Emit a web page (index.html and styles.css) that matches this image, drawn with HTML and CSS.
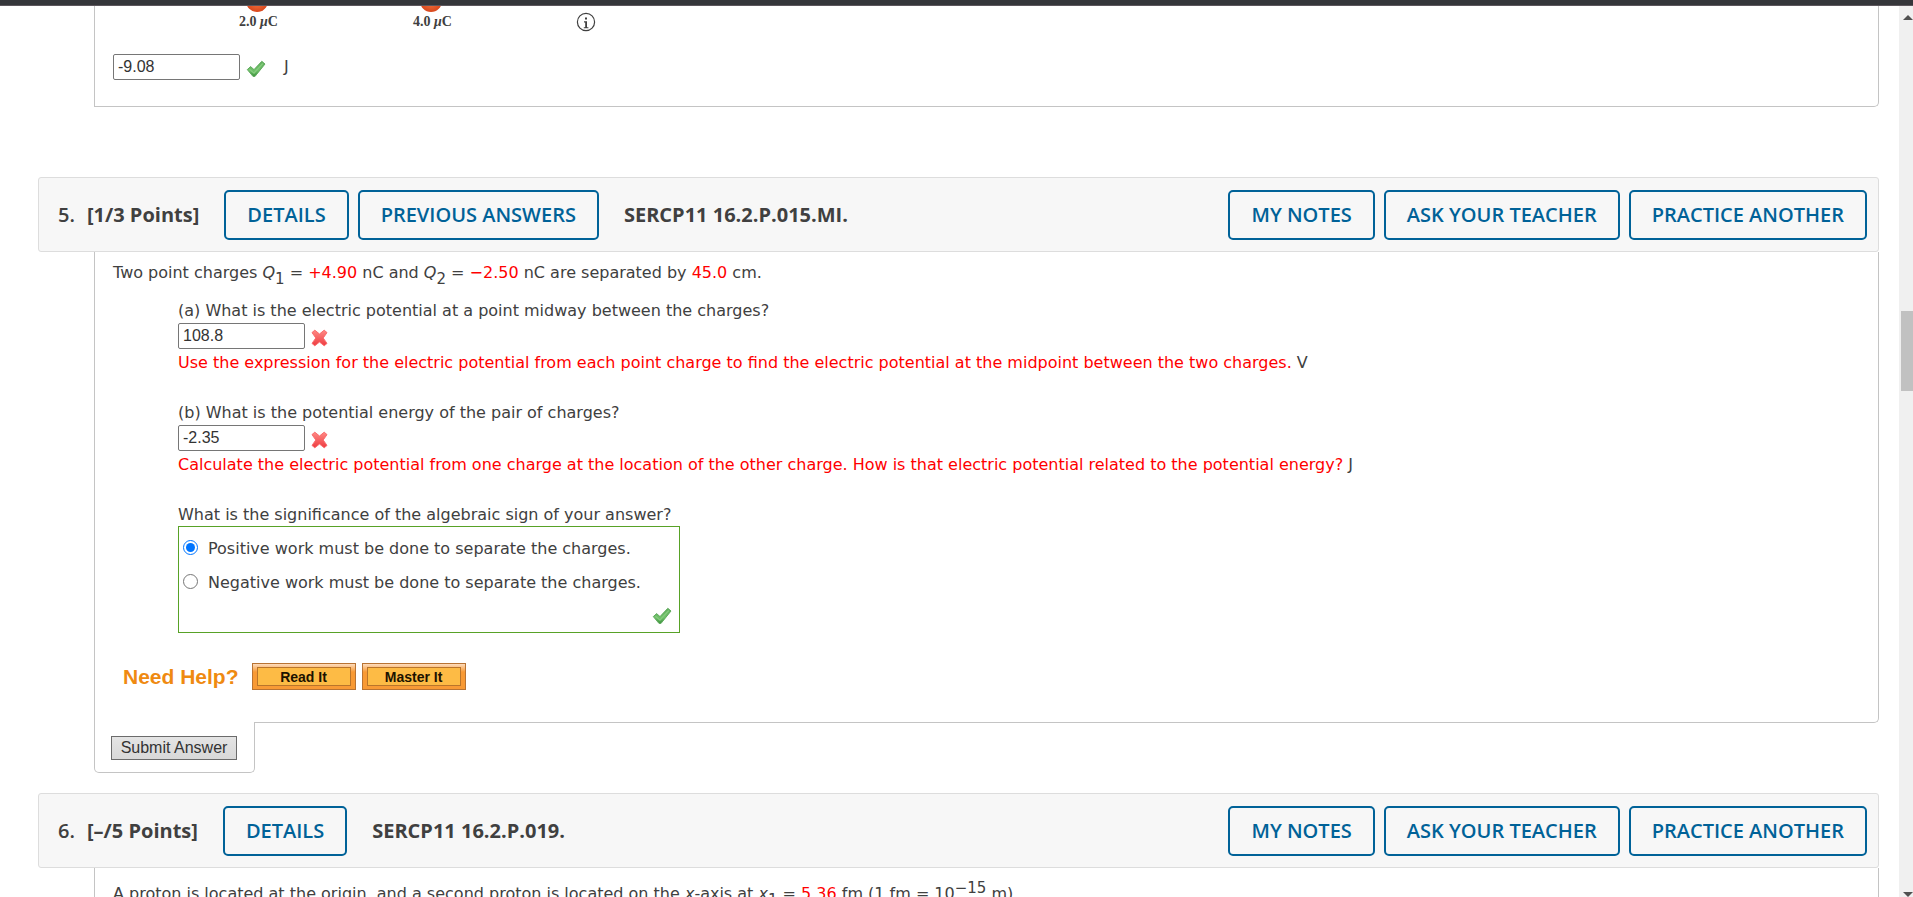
FILE: index.html
```html
<!DOCTYPE html>
<html lang="en">
<head>
    <meta charset="UTF-8">
    <meta name="viewport" content="width=device-width, initial-scale=1.0">
    <title>Homework - Chapter 16</title>
    <link rel="stylesheet" href="styles.css">
</head>
<body>
    <!-- shared marks -->
    <svg class="defs" aria-hidden="true">
        <defs>
            <linearGradient id="green" x1="0" y1="0" x2="0" y2="1">
                <stop offset="0" stop-color="#5fae5c"/>
                <stop offset="0.6" stop-color="#6fc069"/>
                <stop offset="1" stop-color="#3f9440"/>
            </linearGradient>
            <linearGradient id="red" x1="0" y1="0" x2="0" y2="1">
                <stop offset="0" stop-color="#ff8a85"/>
                <stop offset="1" stop-color="#ee3b40"/>
            </linearGradient>
            <symbol id="check" viewBox="0 0 20 18">
                <path d="M1.3 9.6 4.6 6.6 8 9.6 15.8 1.3 19 4 9 16.4 7 16.4Z" fill="url(#green)" stroke="#62ab5f" stroke-linejoin="round"/>
                <path d="M3.4 9.2 8 13 16.8 3.6" fill="none" stroke="#84cb7c" stroke-width="1.4"/>
            </symbol>
            <symbol id="cross" viewBox="0 0 20 18">
                <path d="M1 3.6 3.8 1.2 8.5 5 13.2 1.2 16 3.6 12.2 9 16 14.4 13.2 16.8 8.5 13 3.8 16.8 1 14.4 4.8 9Z" fill="url(#red)" stroke="#fa6a6c" stroke-linejoin="round"/>
            </symbol>
        </defs>
    </svg>

    <div class="topbar"></div>
    <div class="page">
        <main>
            <section class="problem">
                <div class="panel panel-first">
                    <div class="figure">
                        <svg width="360" height="24" role="img" aria-label="Two point charges">
                            <defs>
                                <radialGradient id="ball">
                                    <stop offset="0" stop-color="#f47a45"/>
                                    <stop offset="1" stop-color="#d9471c"/>
                                </radialGradient>
                            </defs>
                            <circle cx="144" cy="-5" r="11" fill="url(#ball)"/>
                            <circle cx="318" cy="-5" r="11" fill="url(#ball)"/>
                            <text x="126" y="20">2.0 <tspan font-style="italic">μ</tspan>C</text>
                            <text x="300" y="20">4.0 <tspan font-style="italic">μ</tspan>C</text>
                        </svg>
                        <svg width="20" height="20" viewBox="0 0 20 20" role="img" aria-label="Image description">
                            <circle cx="10" cy="10" r="8.6" fill="none" stroke="#404040" stroke-width="1.2"/>
                            <path d="M9 5.6h2v2h-2zM8 9.2h3v6h1.4v1H7.8v-1h1.4v-4.8H8z" fill="#404040"/>
                        </svg>
                    </div>
                    <div class="answer">
                        <input type="text" value="-9.08" aria-label="Potential energy">
                        <svg class="mark" role="img" aria-label="Correct"><use href="#check"/></svg>
                        <span class="unit">J</span>
                    </div>
                </div>
            </section>

            <section class="problem">
                <header>
                    <h2>5.</h2>
                    <span class="points">[1/3 Points]</span>
                    <button type="button">DETAILS</button>
                    <button type="button">PREVIOUS ANSWERS</button>
                    <span class="name">SERCP11 16.2.P.015.MI.</span>
                    <div class="tools">
                        <button type="button">MY NOTES</button>
                        <button type="button">ASK YOUR TEACHER</button>
                        <button type="button">PRACTICE ANOTHER</button>
                    </div>
                </header>
                <div class="panel">
                    <p>Two point charges <i>Q</i><sub>1</sub> = <em>+4.90</em> nC and <i>Q</i><sub>2</sub> = <em>−2.50</em> nC are separated by <em>45.0</em> cm.</p>
                    <div class="parts">
                        <div class="part">
                            <label for="partA">(a) What is the electric potential at a point midway between the charges?</label>
                            <div class="answer">
                                <input type="text" id="partA" value="108.8">
                                <svg class="mark" role="img" aria-label="Incorrect"><use href="#cross"/></svg>
                            </div>
                            <p><em>Use the expression for the electric potential from each point charge to find the electric potential at the midpoint between the two charges.</em> V</p>
                        </div>
                        <div class="part">
                            <label for="partB">(b) What is the potential energy of the pair of charges?</label>
                            <div class="answer">
                                <input type="text" id="partB" value="-2.35">
                                <svg class="mark" role="img" aria-label="Incorrect"><use href="#cross"/></svg>
                            </div>
                            <p><em>Calculate the electric potential from one charge at the location of the other charge. How is that electric potential related to the potential energy?</em> J</p>
                        </div>
                        <div class="choice">
                            <p id="signQuestion">What is the significance of the algebraic sign of your answer?</p>
                            <div class="options" role="radiogroup" aria-labelledby="signQuestion">
                                <label><input type="radio" name="sign" checked> Positive work must be done to separate the charges.</label>
                                <label><input type="radio" name="sign"> Negative work must be done to separate the charges.</label>
                                <svg class="mark" role="img" aria-label="Correct"><use href="#check"/></svg>
                            </div>
                        </div>
                    </div>
                    <div class="help">
                        <strong>Need Help?</strong>
                        <button type="button"><span>Read It</span></button>
                        <button type="button"><span>Master It</span></button>
                    </div>
                </div>
                <div class="submit">
                    <button type="submit">Submit Answer</button>
                </div>
            </section>

            <section class="problem">
                <header>
                    <h2>6.</h2>
                    <span class="points">[–/5 Points]</span>
                    <button type="button">DETAILS</button>
                    <span class="name">SERCP11 16.2.P.019.</span>
                    <div class="tools">
                        <button type="button">MY NOTES</button>
                        <button type="button">ASK YOUR TEACHER</button>
                        <button type="button">PRACTICE ANOTHER</button>
                    </div>
                </header>
                <div class="panel panel-last">
                    <p>A proton is located at the origin, and a second proton is located on the <i>x</i>-axis at <i>x</i><sub>1</sub> = <em>5.36</em> fm (1 fm = 10<sup>−15</sup> m).</p>
                </div>
            </section>
        </main>
        <div class="scrollbar" aria-hidden="true">
            <svg width="16" height="5" viewBox="0 0 16 5"><path d="M4 5 9 0 14 5z" fill="#505050"/></svg>
            <div class="track"><div class="thumb"></div></div>
            <svg width="16" height="5" viewBox="0 0 16 5"><path d="M4 0 9 5 14 0z" fill="#505050"/></svg>
        </div>
    </div>
</body>
</html>
```

FILE: styles.css
```css
* {
    box-sizing: border-box;
}

body {
    display: flex;
    flex-direction: column;
    height: 100vh;
    margin: 0;
    overflow: hidden;
    background-color: #ffffff;
    color: #404040;
    font-family: "DejaVu Sans", Verdana, sans-serif;
    font-size: 16px;
    line-height: 20px;
}

p,
h2 {
    margin: 0;
}

em {
    color: #ff0000;
    font-style: normal;
}

sub,
sup {
    font-size: 15px;
    line-height: 0;
}

sub {
    vertical-align: -6px;
}

.defs {
    position: absolute;
    width: 0;
    height: 0;
}

.topbar {
    flex: none;
    height: 6px;
    background-color: #35363a;
    border-bottom: 1px solid #5c565c;
}

.page {
    flex: 1;
    display: flex;
    min-height: 0;
}

main {
    flex: 1;
    overflow: hidden;
    padding: 0 20px 0 38px;
}

/* problem header */
header {
    display: flex;
    align-items: center;
    height: 75px;
    padding: 0 11px 0 19px;
    background-color: #f7f7f7;
    border: 1px solid #dddddd;
    border-radius: 3px;
    font-family: "Open Sans", sans-serif;
    font-size: 20px;
    font-weight: 600;
}

header h2 {
    font-size: 20px;
    font-weight: 600;
    margin-right: 12px;
}

header button {
    height: 50px;
    margin-right: 9px;
    padding: 0 21px;
    background-color: transparent;
    border: 2px solid #006298;
    border-radius: 5px;
    color: #006298;
    font: inherit;
    cursor: pointer;
}

.points {
    margin-right: 25px;
    font-weight: 700;
}

.name {
    margin-left: 16px;
    font-weight: 700;
}

.tools {
    display: flex;
    gap: 9px;
    margin-left: auto;
}

.tools button {
    margin-right: 0;
}

/* problem body */
.panel {
    margin-left: 56px;
    padding: 11px 18px 0;
    border: 1px solid #c4c4c4;
    border-top: none;
    border-bottom-right-radius: 5px;
}

.panel-first {
    height: 101px;
    padding-top: 0;
    margin-bottom: 70px;
}

.panel-last {
    padding-top: 16px;
}

.figure {
    display: flex;
    gap: 103px;
    height: 48px;
}

.figure svg:last-child {
    margin-top: 6px;
}

.figure text {
    font-family: "Liberation Serif", serif;
    font-size: 14px;
    font-weight: bold;
    fill: #404040;
}

.answer {
    display: flex;
    align-items: center;
    gap: 6px;
}

.answer input {
    width: 127px;
    height: 26px;
    padding: 0 4px;
    border: 1px solid #767676;
    border-radius: 2px;
    color: #333333;
    font-family: "Liberation Sans", Arial, sans-serif;
    font-size: 16px;
}

.mark {
    width: 20px;
    height: 18px;
    margin-top: 4px;
}

.unit {
    margin-left: 12px;
}

.parts {
    margin: 18px 0 0 65px;
}

.part {
    margin-bottom: 30px;
}

.part label {
    display: block;
}

.part .answer {
    margin: 2px 0 4px;
}

.options {
    display: flex;
    flex-direction: column;
    gap: 14px;
    width: fit-content;
    height: 107px;
    margin-top: 1px;
    padding: 12px 7px 7px 4px;
    border: 1px solid #58a227;
}

.options label {
    display: flex;
    gap: 10px;
    padding-right: 31px;
}

.options input {
    width: 15px;
    height: 15px;
    margin: 1px 0 0;
}

.options .mark {
    flex: none;
    align-self: flex-end;
    margin: 0;
}

.help {
    display: flex;
    align-items: center;
    gap: 6px;
    margin: 30px 0 32px 10px;
    font-family: "Liberation Sans", Arial, sans-serif;
}

.help strong {
    margin-right: 7px;
    color: #ef8a11;
    font-size: 21px;
}

.help button {
    width: 104px;
    height: 27px;
    padding: 3px 4px;
    background-image: linear-gradient(#fddcbd, #f89a35 8px);
    border: 1px solid #b87333;
    cursor: pointer;
}

.help button span {
    display: block;
    height: 19px;
    background-color: #fdbb45;
    border: 1px solid #b9752b;
    color: #1c1200;
    font-family: "Liberation Sans", Arial, sans-serif;
    font-size: 14px;
    font-weight: bold;
    line-height: 19px;
}

/* tab hanging under the panel */
.submit {
    width: 161px;
    height: 51px;
    margin: -1px 0 20px 56px;
    padding: 14px 16px;
    background-color: #ffffff;
    border: 1px solid #c4c4c4;
    border-top: none;
    border-radius: 0 0 5px 5px;
}

.submit button {
    width: 126px;
    height: 24px;
    padding: 0;
    background-image: linear-gradient(#e4e4e4, #d8d8d8);
    border: 1px solid #6b6b6b;
    color: #333333;
    font-family: "Liberation Sans", Arial, sans-serif;
    font-size: 16px;
}

/* scrollbar */
.scrollbar {
    flex: none;
    display: flex;
    flex-direction: column;
    width: 14px;
    padding-top: 9px;
    overflow: hidden;
    background-color: #f0f0f0;
}

.track {
    flex: 1;
    display: grid;
    grid-template-rows: 291fr 80fr 502fr;
}

.thumb {
    grid-row: 2;
    margin-left: 2px;
    background-color: #c1c1c1;
}
```
